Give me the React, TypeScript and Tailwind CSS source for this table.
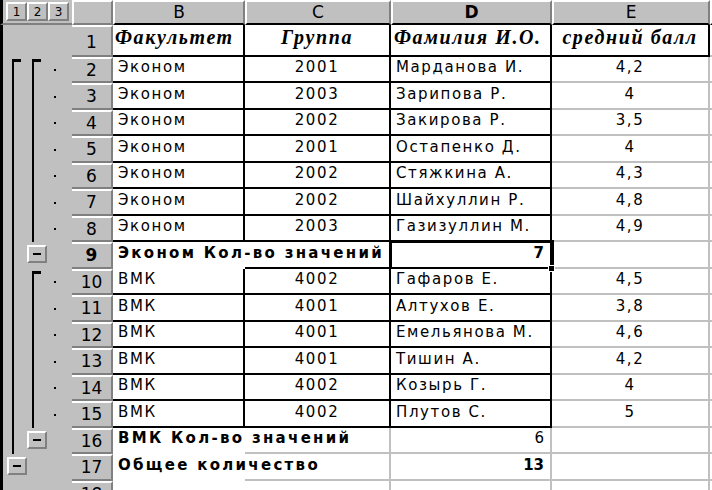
import React from "react";

type Kind = "head" | "data" | "sum" | "total" | "empty";
type Lvl = "start" | "line" | "btn" | null;
interface Row {
  n: number;
  b?: string;
  c?: string;
  d?: string;
  e?: string;
  kind: Kind;
  h: string;
  l1: Lvl;
  l2: Lvl;
  dot: boolean;
}

const rows: Row[] = [
  { n: 1, b: "Факультет", c: "Группа", d: "Фамилия И.О.", e: "средний балл", kind: "head", h: "h-[32px]", l1: null, l2: null, dot: false },
  { n: 2, b: "Эконом", c: "2001", d: "Марданова И.", e: "4,2", kind: "data", h: "h-[26px]", l1: "start", l2: "start", dot: true },
  { n: 3, b: "Эконом", c: "2003", d: "Зарипова Р.", e: "4", kind: "data", h: "h-[27px]", l1: "line", l2: "line", dot: true },
  { n: 4, b: "Эконом", c: "2002", d: "Закирова Р.", e: "3,5", kind: "data", h: "h-[26px]", l1: "line", l2: "line", dot: true },
  { n: 5, b: "Эконом", c: "2001", d: "Остапенко Д.", e: "4", kind: "data", h: "h-[27px]", l1: "line", l2: "line", dot: true },
  { n: 6, b: "Эконом", c: "2002", d: "Стяжкина А.", e: "4,3", kind: "data", h: "h-[26px]", l1: "line", l2: "line", dot: true },
  { n: 7, b: "Эконом", c: "2002", d: "Шайхуллин Р.", e: "4,8", kind: "data", h: "h-[27px]", l1: "line", l2: "line", dot: true },
  { n: 8, b: "Эконом", c: "2003", d: "Газизуллин М.", e: "4,9", kind: "data", h: "h-[26px]", l1: "line", l2: "line", dot: true },
  { n: 9, b: "Эконом Кол-во значений", d: "7", kind: "sum", h: "h-[27px]", l1: "line", l2: "btn", dot: false },
  { n: 10, b: "ВМК", c: "4002", d: "Гафаров Е.", e: "4,5", kind: "data", h: "h-[26px]", l1: "line", l2: "start", dot: true },
  { n: 11, b: "ВМК", c: "4001", d: "Алтухов Е.", e: "3,8", kind: "data", h: "h-[27px]", l1: "line", l2: "line", dot: true },
  { n: 12, b: "ВМК", c: "4001", d: "Емельянова М.", e: "4,6", kind: "data", h: "h-[26px]", l1: "line", l2: "line", dot: true },
  { n: 13, b: "ВМК", c: "4001", d: "Тишин А.", e: "4,2", kind: "data", h: "h-[27px]", l1: "line", l2: "line", dot: true },
  { n: 14, b: "ВМК", c: "4002", d: "Козырь Г.", e: "4", kind: "data", h: "h-[26px]", l1: "line", l2: "line", dot: true },
  { n: 15, b: "ВМК", c: "4002", d: "Плутов С.", e: "5", kind: "data", h: "h-[27px]", l1: "line", l2: "line", dot: true },
  { n: 16, b: "ВМК Кол-во значений", d: "6", kind: "total", h: "h-[26px]", l1: "line", l2: "btn", dot: false },
  { n: 17, b: "Общее количество", d: "13", kind: "total", h: "h-[27px]", l1: "btn", l2: null, dot: false },
  { n: 18, kind: "empty", h: "h-[26px]", l1: null, l2: null, dot: false },
];

const SANS = "font-['DejaVu_Sans',sans-serif]";

function MinusBtn({ ml }: { ml: string }) {
  return (
    <div
      className={`${ml} mt-[3px] flex h-[18px] w-[20px] shrink-0 items-center justify-center border-2 border-t-white border-l-white border-r-[#808080] border-b-[#808080] bg-[#c0c0c0]`}
    >
      <div className="h-[2px] w-[8px] bg-black" />
    </div>
  );
}

function Slot({ lvl, w, lineMl, btnMl }: { lvl: Lvl; w: string; lineMl: string; btnMl: string }) {
  return (
    <div className={`${w} flex h-full shrink-0`}>
      {lvl === "line" && <div className={`${lineMl} h-full w-[2px] bg-black`} />}
      {lvl === "start" && (
        <div className={`${lineMl} mt-[2px] h-full w-[9px] border-l-2 border-t-[3px] border-black`} />
      )}
      {lvl === "btn" && <MinusBtn ml={btnMl} />}
    </div>
  );
}

function Gutter({ r }: { r: Row }) {
  return (
    <div className="flex h-full w-[72px] shrink-0 border-l-[3px] border-l-black bg-[#c0c0c0]">
      <Slot lvl={r.l1} w="w-[23px]" lineMl="ml-[9px]" btnMl="ml-[4px]" />
      <Slot lvl={r.l2} w="w-[20px]" lineMl="ml-[6px]" btnMl="ml-[1px]" />
      <div className="flex h-full w-[26px] shrink-0 items-center">
        {r.dot && <div className="ml-[8px] h-[2px] w-[2px] bg-black" />}
      </div>
    </div>
  );
}

function RowHeader({ r }: { r: Row }) {
  return (
    <div
      className={`flex h-full w-[41px] shrink-0 items-start justify-center overflow-hidden border-t-2 border-t-white border-b-2 border-b-[#808080] border-r-2 border-r-[#808080] bg-[#c0c0c0] text-[17px] leading-[21px] text-black ${SANS} ${r.n === 9 ? "font-bold" : ""} ${r.n === 1 ? "pt-[5px]" : "pt-[1px]"}`}
    >
      {r.n}
    </div>
  );
}

function DataRow({ r }: { r: Row }) {
  const isBox = r.kind === "head" || r.kind === "data";
  const blk = "border-black";
  const gry = "border-[#c0c0c0]";
  const textBase = `${SANS} text-[15px] tracking-[1.6px] text-black`;
  const headText = "font-['Liberation_Serif',serif] text-[20px] font-bold italic tracking-[1.6px] text-black";

  const bRight = isBox ? (r.kind === "head" ? blk : gry) : "border-transparent";
  const bBottom = isBox || r.n === 9 ? blk : gry;
  const cRight = isBox || r.n === 9 ? blk : gry;
  const dRight = isBox || r.n === 9 ? blk : gry;
  const dBottom = isBox || r.n === 9 ? blk : gry;
  const eRight = r.kind === "head" ? blk : gry;
  const eBottom = r.kind === "head" ? blk : gry;

  const bold = r.kind === "sum" || r.kind === "total";

  return (
    <div className={`flex ${r.h} w-full`}>
      <Gutter r={r} />
      <RowHeader r={r} />
      {/* B */}
      <div
        className={`relative flex h-full w-[132px] shrink-0 items-end border-r-2 border-b-2 ${bRight} ${bBottom} bg-white ${
          r.kind === "head" ? "overflow-hidden" : ""
        }`}
      >
        {r.kind === "head" ? (
          <span className={`${headText} whitespace-nowrap pb-[3px] pl-[2px]`}>{r.b}</span>
        ) : bold ? (
          <span className={`${SANS} z-10 whitespace-nowrap pb-[3px] pl-[5px] text-[15px] font-bold tracking-[2.3px] text-black`}>
            {r.b}
          </span>
        ) : (
          <span className={`${textBase} whitespace-nowrap pb-[3px] pl-[5px]`}>{r.b}</span>
        )}
      </div>
      {/* C */}
      <div className={`flex h-full w-[146px] shrink-0 items-end justify-center border-r-2 border-b-2 ${cRight} ${bBottom} bg-white`}>
        {r.kind === "head" ? (
          <span className={`${headText} pb-[3px]`}>{r.c}</span>
        ) : r.kind === "data" ? (
          <span className={`${textBase} pb-[3px]`}>{r.c}</span>
        ) : null}
      </div>
      {/* D */}
      <div
        className={`relative flex h-full w-[161px] shrink-0 items-end border-r-2 border-b-2 ${dRight} ${dBottom} bg-white ${
          r.kind === "head" || r.kind === "data" ? "justify-start" : "justify-end"
        } ${r.n === 9 ? "outline-[3px] outline-black -outline-offset-[1px]" : ""}`}
      >
        {r.kind === "head" ? (
          <span className={`${headText} whitespace-nowrap pb-[3px] pl-[3px]`}>{r.d}</span>
        ) : r.kind === "data" ? (
          <span className={`${textBase} whitespace-nowrap pb-[3px] pl-[5px]`}>{r.d}</span>
        ) : r.kind === "empty" ? null : (
          <span
            className={`${SANS} pb-[3px] pr-[6px] text-[15px] text-black ${r.n === 9 || r.n === 17 ? "font-bold" : ""}`}
          >
            {r.d}
          </span>
        )}
        {r.n === 9 && (
          <div className="absolute -right-[5px] -bottom-[5px] z-20 h-[7px] w-[7px] border border-white bg-black" />
        )}
      </div>
      {/* E */}
      <div className={`flex h-full w-[158px] shrink-0 items-end justify-center border-r-2 border-b-2 ${eRight} ${eBottom} bg-white`}>
        {r.kind === "head" ? (
          <span className={`${headText} whitespace-nowrap pb-[3px]`}>{r.e}</span>
        ) : r.kind === "data" ? (
          <span className={`${textBase} pb-[3px]`}>{r.e}</span>
        ) : null}
      </div>
      <div className="h-full flex-1 border-b-2 border-[#c0c0c0] bg-white" />
    </div>
  );
}

function ColHeader({ label, w, bold }: { label: string; w: string; bold?: boolean }) {
  return (
    <div
      className={`flex h-full ${w} shrink-0 items-center justify-center border-t-2 border-l-2 border-t-white border-l-white border-r-2 border-r-[#808080] border-b-2 border-b-black bg-[#c0c0c0] text-[17px] text-black ${SANS} ${
        bold ? "font-bold" : ""
      }`}
    >
      {label}
    </div>
  );
}

export default function App() {
  return (
    <div className="h-[490px] w-[712px] overflow-hidden bg-white">
      {/* header row */}
      <div className="flex h-[25px] w-full">
        <div className="flex h-full w-[72px] shrink-0 border-l-[3px] border-l-black border-b-2 border-b-[#808080] bg-[#c0c0c0] pl-[3px] pt-[2px]">
          <div className="flex h-[19px]">
            {["1", "2", "3"].map((x) => (
              <div
                key={x}
                className={`flex h-[19px] w-[21px] items-center justify-center border-2 border-t-white border-l-white border-r-[#808080] border-b-[#808080] bg-[#c0c0c0] text-[12px] text-black ${SANS}`}
              >
                {x}
              </div>
            ))}
          </div>
        </div>
        <div className="h-full w-[41px] shrink-0 border-t-2 border-l-2 border-t-white border-l-white border-r-2 border-r-[#808080] border-b-2 border-b-[#808080] bg-[#c0c0c0]" />
        <ColHeader label="B" w="w-[132px]" />
        <ColHeader label="C" w="w-[146px]" />
        <ColHeader label="D" w="w-[161px]" bold />
        <ColHeader label="E" w="w-[158px]" />
        <div className="h-full flex-1 border-t-2 border-l-2 border-t-white border-l-white border-b-2 border-b-black bg-[#c0c0c0]" />
      </div>
      {rows.map((r) => (
        <DataRow key={r.n} r={r} />
      ))}
    </div>
  );
}
